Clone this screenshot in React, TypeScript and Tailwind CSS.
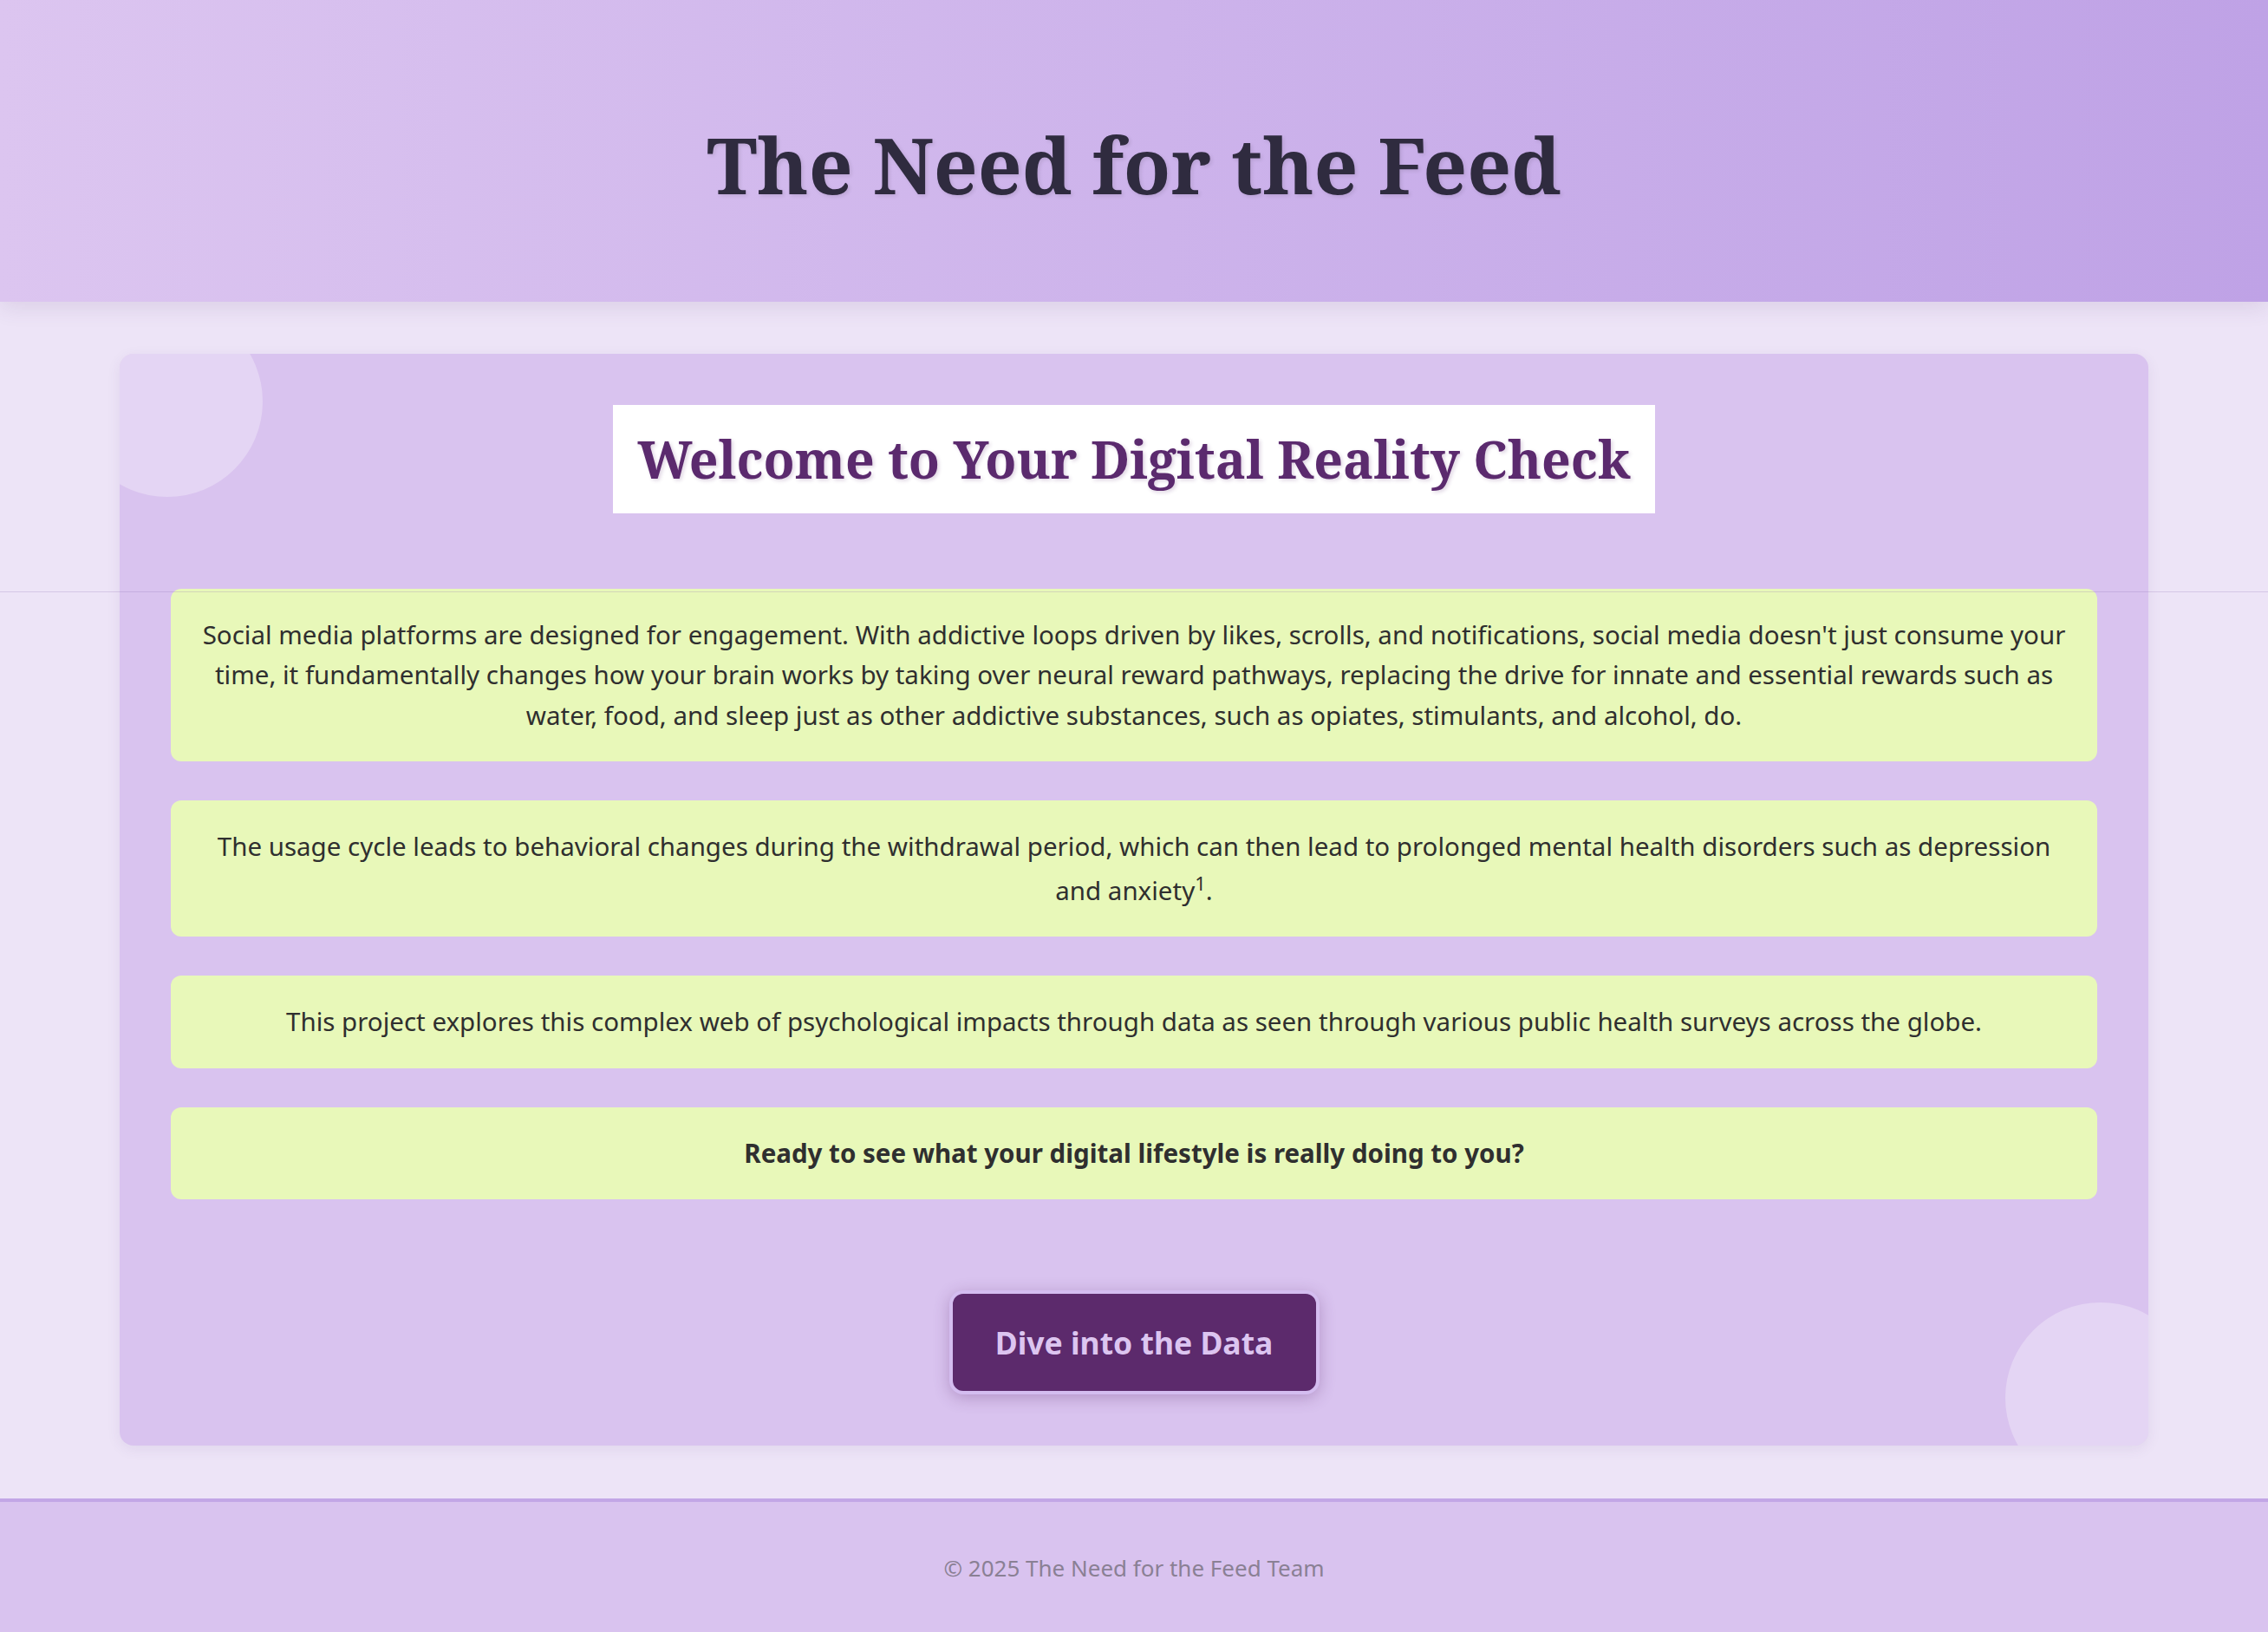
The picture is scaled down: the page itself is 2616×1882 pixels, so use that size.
const paragraphs = [
  "Social media platforms are designed for engagement. With addictive loops driven by likes, scrolls, and notifications, social media doesn't just consume your time, it fundamentally changes how your brain works by taking over neural reward pathways, replacing the drive for innate and essential rewards such as water, food, and sleep just as other addictive substances, such as opiates, stimulants, and alcohol, do.",
];

const InfoBox = ({ children, bold }: { children: React.ReactNode; bold?: boolean }) => {
  return (
    <div
      className={`rounded-[12px] bg-[#e8f8b9] px-[30px] py-[30px] text-center text-[29.5px] leading-[46.5px] text-[#2f2f2f] ${
        bold ? "font-bold" : ""
      }`}
    >
      {children}
    </div>
  );
};

export default function App() {
  return (
    <div className="relative min-h-screen bg-[#ede4f7] font-['Noto_Sans',sans-serif]">
      <header className="relative z-10 flex h-[348px] items-center justify-center bg-gradient-to-r from-[#dcc5f0] to-[#bfa2e6] pt-[30px] shadow-[0_6px_24px_rgba(80,50,110,0.12)]">
        <h1 className="font-['Noto_Serif','DejaVu_Serif',serif] text-[89px] font-bold leading-none text-[#2f2b3f] [text-shadow:2px_2px_4px_rgba(0,0,0,0.1)]">
          The Need for the Feed
        </h1>
      </header>

      <main className="px-[138px] pt-[60px] pb-[61px]">
        <section className="relative overflow-hidden rounded-[16px] bg-[#d9c3ef] p-[59px] shadow-[0_4px_16px_rgba(80,50,110,0.08)]">
          <div className="pointer-events-none absolute -left-[55px] -top-[55px] h-[220px] w-[220px] rounded-full bg-white/30" />
          <div className="pointer-events-none absolute -bottom-[55px] -right-[55px] h-[220px] w-[220px] rounded-full bg-white/30" />

          <div className="relative flex justify-center">
            <h2 className="bg-white px-[28px] py-[27px] font-['Noto_Serif','DejaVu_Serif',serif] text-[59px] font-bold leading-[1.2] text-[#5b2a6e] [text-shadow:2px_2px_4px_rgba(91,42,110,0.2)]">
              Welcome to Your Digital Reality Check
            </h2>
          </div>

          <div className="relative mt-[87px] flex flex-col gap-[45px]">
            <InfoBox>{paragraphs[0]}</InfoBox>
            <InfoBox>
              The usage cycle leads to behavioral changes during the withdrawal period, which can then lead to prolonged mental health disorders such as depression and anxiety<sup className="top-0 align-super leading-[37px]">1</sup>.
            </InfoBox>
            <InfoBox>
              This project explores this complex web of psychological impacts through data as seen through various public health surveys across the globe.
            </InfoBox>
            <InfoBox bold>Ready to see what your digital lifestyle is really doing to you?</InfoBox>
          </div>

          <div className="relative mt-[105px] flex justify-center">
            <button className="h-[120px] w-[427px] rounded-[16px] border-[4px] border-[#d4bdf0] bg-[#5c2a6c] text-[35.5px] font-bold text-[#dcc5f0] shadow-[0_4px_18px_rgba(92,42,108,0.3)]">
              Dive into the Data
            </button>
          </div>
        </section>
      </main>

      <footer className="border-t-[4px] border-[#c2a6e6] bg-[#d9c3ef] py-[57px] text-center text-[26px] leading-[1.5] text-[#8a8094]">
        © 2025 The Need for the Feed Team
      </footer>

      <div className="pointer-events-none absolute left-0 top-[682px] z-20 h-px w-full bg-[#8f6fb3]/25" />
    </div>
  );
}
